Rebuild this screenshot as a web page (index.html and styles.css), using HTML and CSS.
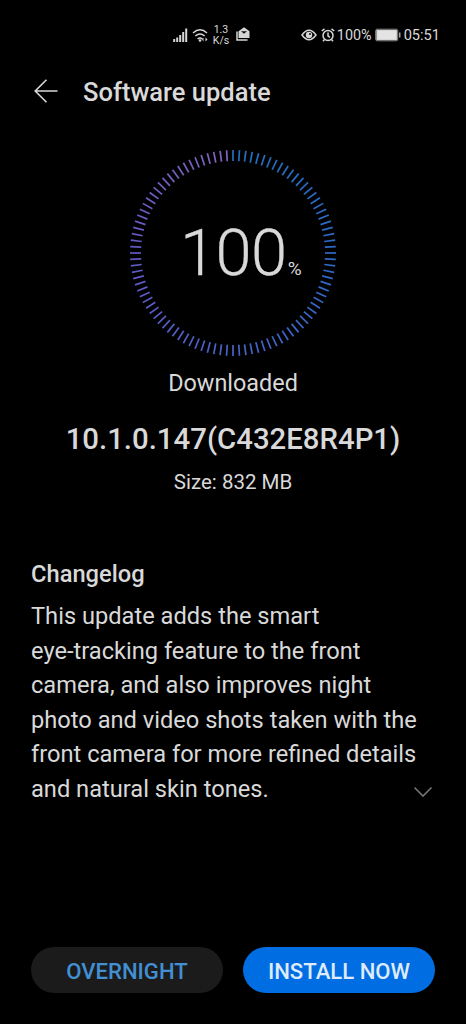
FILE: index.html
```html
<!DOCTYPE html>
<html lang="en">
<head>
<meta charset="utf-8">
<title>Software update</title>
<link rel="stylesheet" href="styles.css">
</head>
<body>
<div class="screen">
  <div class="status">
    <svg class="signal" width="15" height="14" viewBox="0 0 15 14"><path d="M1.2 14v-3M4.2 14v-4.500M7.2 14V7M10.200 14V4M13.200 14V.5"/></svg>
    <svg class="wifi" width="18" height="14" viewBox="0 0 18 14"><path d="M1 5Q8 -1.500 15 5M3.300 8Q8 4 12.700 8M5.600 11Q8 9 10.400 11"/><circle cx="8" cy="12.500" r="1.300"/><path class="fill" d="M11.500 9.500v4L10 11.500zM13.500 9.500v4l2-2z"/></svg>
    <div class="speed"><span>1.3</span><span>K/s</span></div>
    <svg class="mail" width="14" height="14" viewBox="0 0 14 14"><path d="M1 4.500v8.500h10.500" fill="none" stroke="#d6d6d6" stroke-width="1.500"/><path d="M2.500 4.200 8 .3l5.500 3.900V11h-11z" fill="#d6d6d6"/><path d="M5 4.200h6L8 6.800z" fill="#111"/></svg>
    <div class="gap"></div>
    <svg class="eye" width="16" height="12" viewBox="0 0 16 12"><path d="M1 6Q8-3.500 15 6Q8 15.500 1 6Z"/><circle cx="8" cy="6" r="3.200" fill="#d6d6d6" stroke="none"/><circle cx="9" cy="5" r="1" fill="#111" stroke="none"/></svg>
    <svg class="alarm" width="14" height="14" viewBox="0 0 14 14"><circle cx="7" cy="7.500" r="5"/><path d="M.8 3 3.500.8M13.200 3 10.500.8M7 4.500v3.300l2 1.500M3.500 11.500 2 13.300M10.500 11.500l1.500 1.800"/></svg>
    <span class="battery-text">100%</span>
    <svg class="battery" width="26" height="14" viewBox="0 0 26 14"><rect x=".7" y="1.200" width="22" height="11.600" rx="1.500" fill="#444" stroke="#8b8b8b"/><rect x="2" y="2.500" width="19.400" height="9" fill="#e4e4e4"/><path d="M24.700 4.500v5" stroke="#a0a0a0" stroke-width="1.600"/></svg>
    <span class="clock">05:51</span>
  </div>
  <header class="header">
    <svg width="24" height="24" viewBox="0 0 24 24"><path d="M23.500 12H1.200M12.500.8 1.200 12l11.300 11.200"/></svg>
    <h1>Software update</h1>
  </header>
  <main>
    <section class="progress">
      <svg class="ring" width="208" height="208" viewBox="-104 -104 208 208"></svg>
      <div class="value"><span class="number">100</span><span class="percent">%</span></div>
    </section>
    <div class="state">Downloaded</div>
    <div class="version">10.1.0.147(C432E8R4P1)</div>
    <div class="size">Size: 832 MB</div>
    <section class="changelog">
      <h2>Changelog</h2>
      <p>This update adds the smart<br>eye-tracking feature to the front<br>camera, and also improves night<br>photo and video shots taken with the<br>front camera for more refined details<br>and natural skin tones.</p>
      <svg class="chevron" width="20" height="12" viewBox="0 0 20 12"><path d="M1.500 1.500 10 10l8.500-8.500"/></svg>
    </section>
  </main>
  <footer class="actions">
    <button class="later">OVERNIGHT</button>
    <button class="install">INSTALL NOW</button>
  </footer>
</div>
<script src="ring.js"></script>
</body>
</html>
```
FILE: styles.css
```css
* { box-sizing: border-box; }
body { margin: 0; background: #000; color: #d9d9d9; font-family: Roboto, sans-serif; }
svg { display: block; flex: none; }
.screen { width: 466px; height: 1024px; display: flex; flex-direction: column; overflow: hidden; }
.status { height: 69px; padding: 0 26px 0 173px; display: flex; align-items: center; font-size: 14.6px; white-space: nowrap; }
.status svg { fill: none; stroke: #d6d6d6; stroke-width: 1.5; }
.battery-text, .clock { padding-top: 1px; }
.battery-text { font-size: 14.4px; }
.status .signal { stroke-width: 2; }
.status .wifi { margin-left: 4px; }
.wifi circle, .wifi .fill { fill: #d6d6d6; stroke: none; }
.speed { margin-left: 2px; width: 18px; display: flex; flex-direction: column; align-items: center; font-size: 10.5px; line-height: 11px; }
.status .mail { margin: -1px 0 0 6px; stroke: none; }
.gap { flex: 1; }
.status .alarm { margin: 0 2px 0 4px; }
.status .battery { margin: 0 3px 0 3px; stroke-width: 1; }
.header { height: 46px; padding-left: 34px; display: flex; align-items: center; gap: 25px; }
.header svg { margin-top: -2px; fill: none; stroke: #d9d9d9; stroke-width: 1.6; }
h1 { margin: 0; font-size: 25.5px; font-weight: 500; line-height: 46px; }
main { flex: 1; display: flex; flex-direction: column; align-items: center; padding-top: 34px; }
.progress { display: grid; width: 208px; height: 208px; }
.ring, .value { grid-area: 1 / 1; }
.ring { stroke-width: 1.7; }
.value { display: flex; align-items: baseline; padding: 64px 0 0 51px; }
.number { font-size: 65px; font-weight: 300; line-height: 80px; letter-spacing: -0.5px; -webkit-text-stroke: 0.3px #d9d9d9; }
.percent { margin-left: 1px; font-size: 19px; }
.state { margin-top: 10px; font-size: 23.4px; line-height: 32px; }
.version { margin-top: 20px; font-size: 29.35px; font-weight: 500; line-height: 40px; }
.size { margin-top: 9px; font-size: 20.5px; line-height: 28px; }
.changelog { position: relative; align-self: stretch; margin: 62px 31px 0; }
h2 { margin: 0; font-size: 23.7px; font-weight: 500; line-height: 32px; }
p { margin: 9.4px 0 0; font-size: 23.65px; line-height: 34.5px; white-space: nowrap; }
.chevron { position: absolute; right: 2px; bottom: 8px; fill: none; stroke: #747474; stroke-width: 1.6; }
.actions { display: flex; gap: 20px; padding: 0 31px 31px; }
button { flex: 1; height: 46px; padding: 1px 0 0; border: 0; border-radius: 23px; font: 500 22.1px/46px Roboto, sans-serif; white-space: nowrap; }
.later { background: #1b1b1b; color: #438fd3; }
.install { background: #006de2; color: #deebfa; }
```
FILE: ring.js
```js
// Draws one tick per percent, fading from blue to violet clockwise.
const ring = document.querySelector('.ring');
const stops = [[35, 112, 190], [45, 105, 196], [72, 99, 197], [98, 88, 196], [132, 100, 188]];
for (let i = 0; i < 100; i++) {
  const t = i / 25;
  const k = Math.floor(t);
  const rgb = stops[k].map((c, j) => Math.round(c + (stops[k + 1][j] - c) * (t - k)));
  const line = document.createElementNS('http://www.w3.org/2000/svg', 'line');
  line.setAttribute('y1', -103);
  line.setAttribute('y2', -92);
  line.setAttribute('stroke', `rgb(${rgb})`);
  line.setAttribute('transform', `rotate(${i * 3.6})`);
  ring.append(line);
}
```
